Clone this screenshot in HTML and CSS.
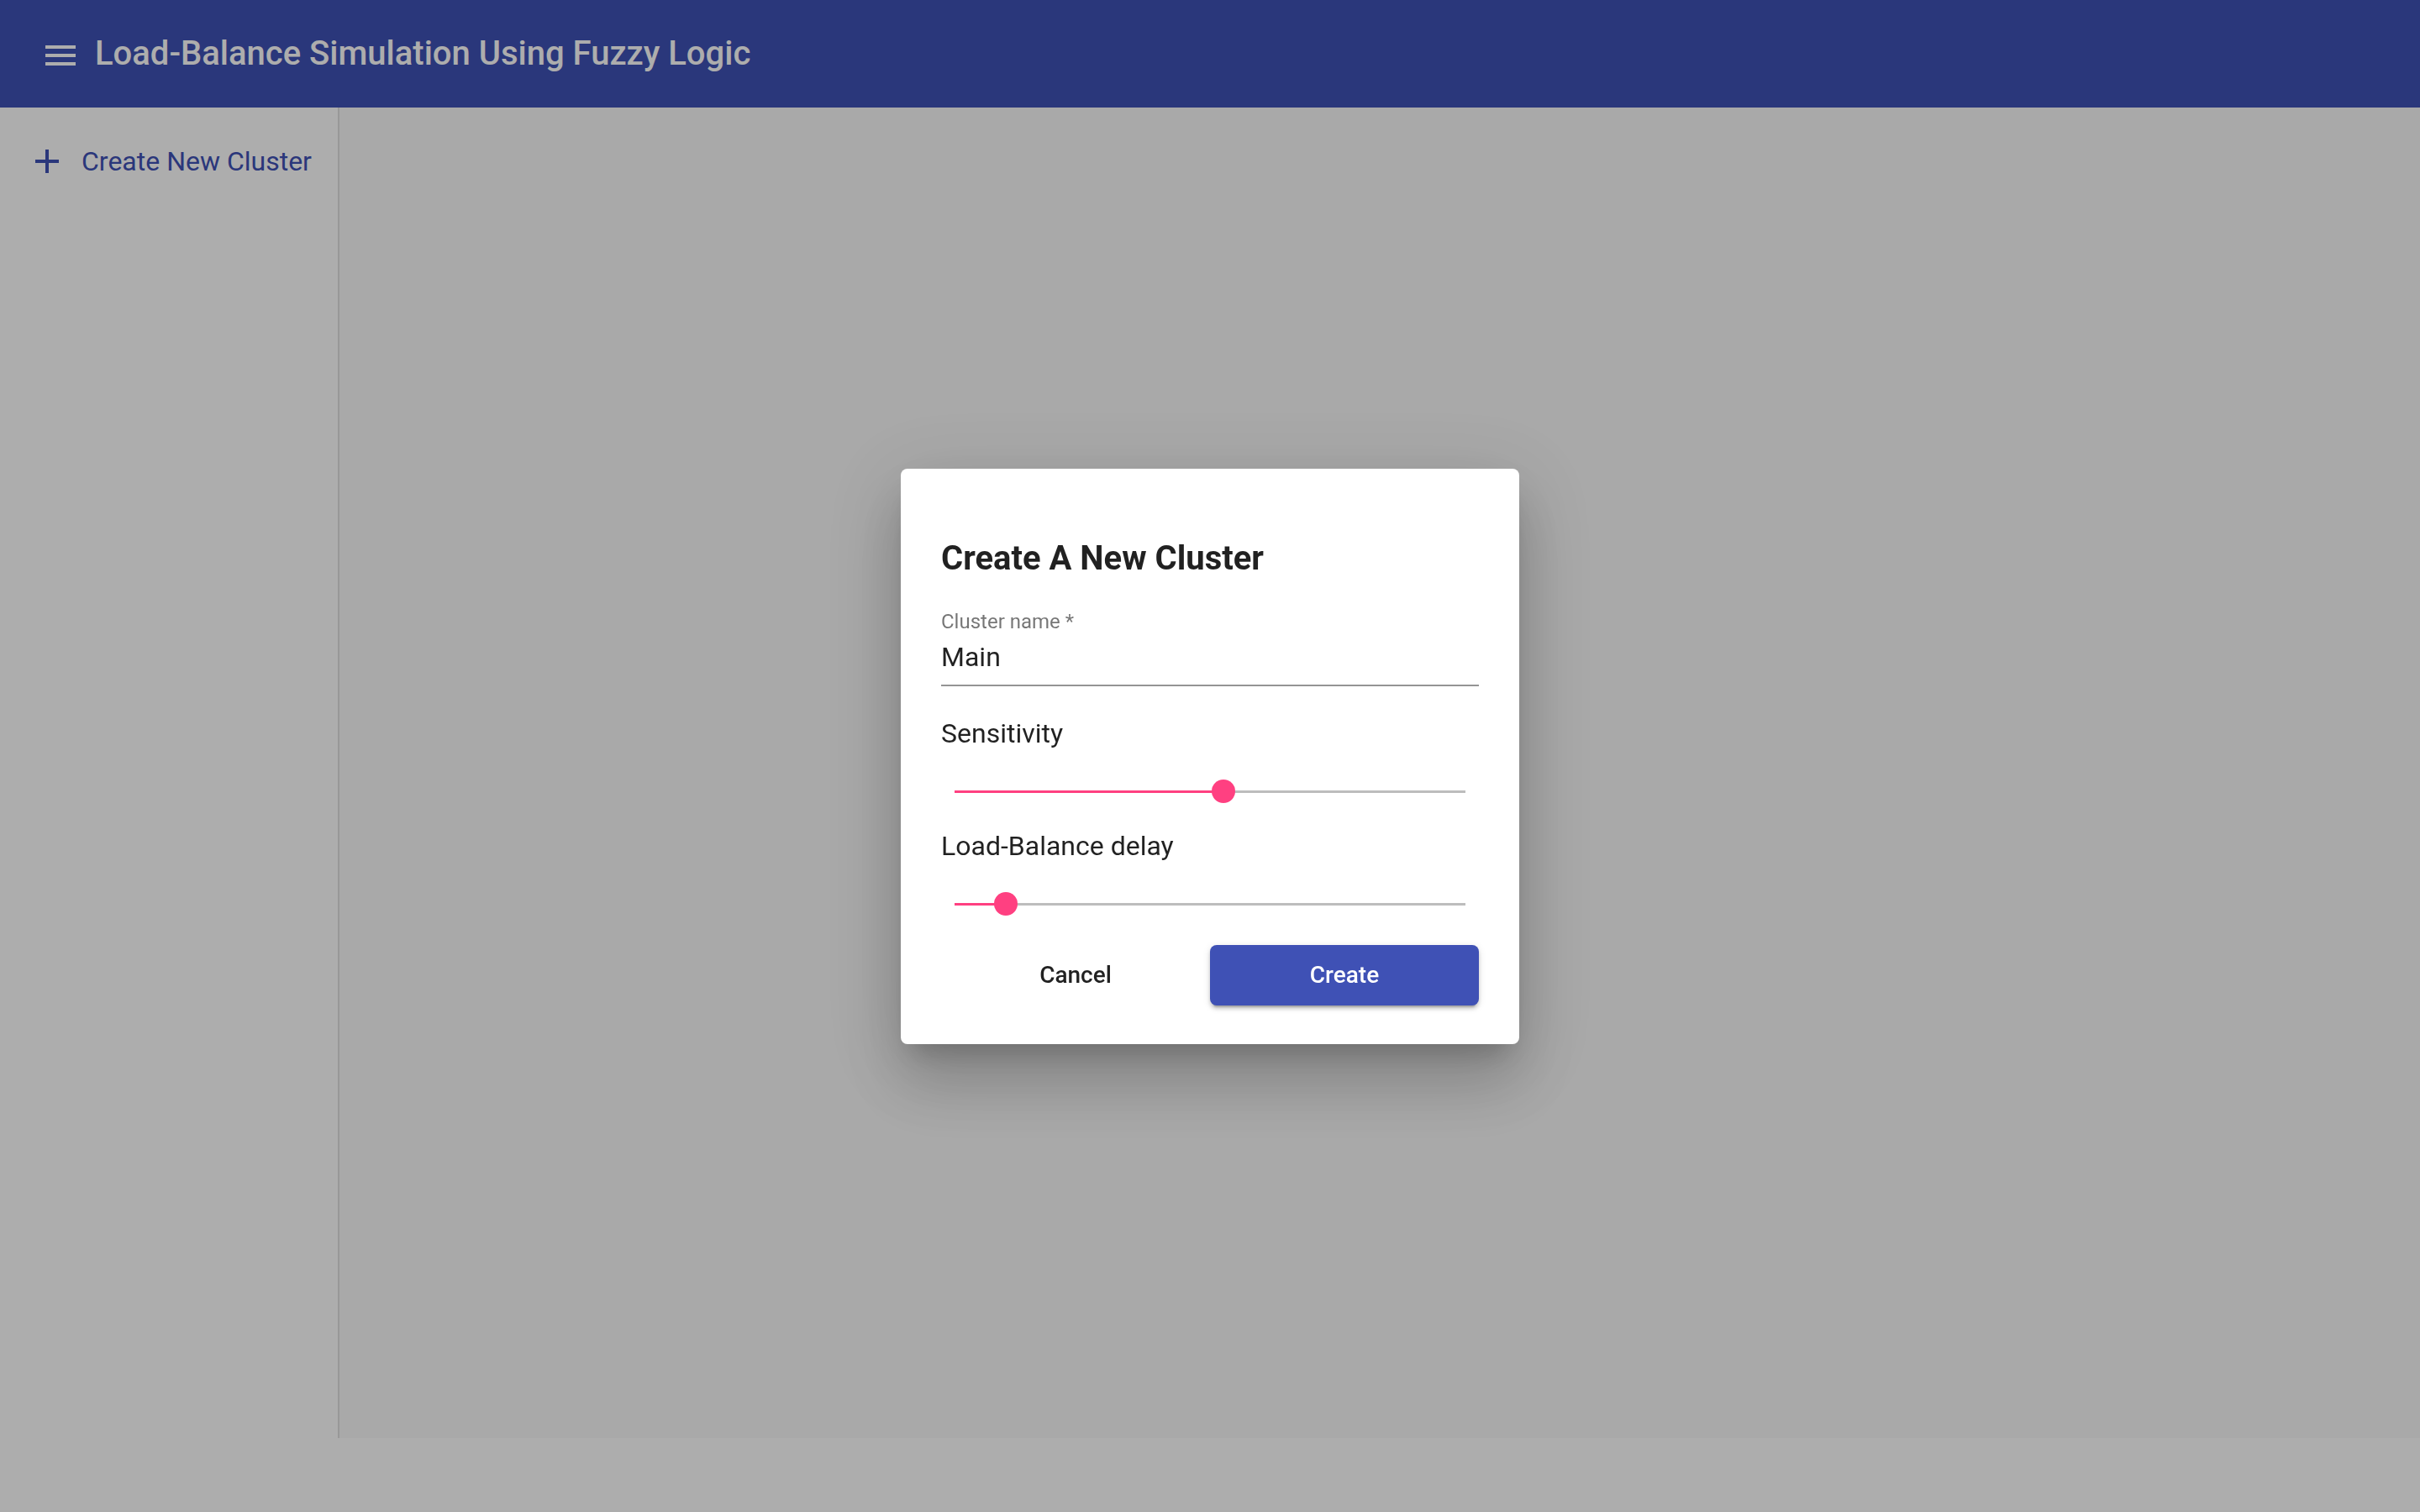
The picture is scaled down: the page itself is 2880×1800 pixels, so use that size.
FILE: index.html
```html
<!DOCTYPE html>
<html lang="en">
  <head>
    <meta charset="UTF-8" />
    <meta name="viewport" content="width=device-width, initial-scale=1.0" />
    <title>Load-Balance Simulation Using Fuzzy Logic</title>
    <link rel="stylesheet" href="styles.css">
  </head>
  <body>
    <div class="app">
      <header class="app-bar">
        <button class="menu-btn" aria-label="menu">
          <svg viewBox="0 0 24 24" width="48" height="48">
            <path d="M3 18h18v-2H3v2zm0-5h18v-2H3v2zm0-7v2h18V6H3z" fill="#fff" />
          </svg>
        </button>
        <h1 class="app-title">Load-Balance Simulation Using Fuzzy Logic</h1>
      </header>
      <div class="app-body">
        <nav class="sidebar">
          <div class="nav-item">
            <svg viewBox="0 0 24 24" width="48" height="48">
              <path d="M19 13h-6v6h-2v-6H5v-2h6V5h2v6h6v2z" fill="#3f51b5" />
            </svg>
            <span>Create New Cluster</span>
          </div>
        </nav>
        <main class="content"></main>
      </div>
    </div>

    <div class="backdrop">
      <div class="dialog">
        <h2 class="dialog-title">Create A New Cluster</h2>
        <label class="field-label" for="cluster-name">Cluster name *</label>
        <input class="field-input" id="cluster-name" type="text" value="Main" />

        <p class="slider-label">Sensitivity</p>
        <div class="slider">
          <div class="track"></div>
          <div class="track-fill" style="width: 52.6%"></div>
          <div class="thumb" style="left: 52.6%"></div>
        </div>

        <p class="slider-label">Load-Balance delay</p>
        <div class="slider">
          <div class="track"></div>
          <div class="track-fill" style="width: 10%"></div>
          <div class="thumb" style="left: 10%"></div>
        </div>

        <div class="actions">
          <button class="btn cancel">Cancel</button>
          <button class="btn create">Create</button>
        </div>
      </div>
    </div>
  </body>
</html>
```

FILE: styles.css
```css
body {
  margin: 0;
  background-color: #fff;
  font-family: Roboto, "Liberation Sans", sans-serif;
}

.app {
  height: 1712px;
  display: flex;
  flex-direction: column;
}

.app-bar {
  height: 128px;
  flex-shrink: 0;
  background-color: #3f51b5;
  display: flex;
  align-items: center;
  padding-left: 48px;
}

.menu-btn {
  border: none;
  background: none;
  padding: 0;
  width: 48px;
  height: 48px;
  margin-top: 4px;
  display: flex;
}

.app-title {
  margin: 0 0 0 17px;
  color: #fff;
  font-size: 40px;
  font-weight: 500;
  line-height: 48px;
}

.app-body {
  flex: 1;
  display: flex;
}

.sidebar {
  width: 402px;
  border-right: 2px solid rgba(0, 0, 0, 0.12);
  background-color: #fff;
  padding-top: 40px;
}

.nav-item {
  display: flex;
  align-items: center;
  height: 48px;
  padding-left: 32px;
  color: #3f51b5;
  font-size: 32px;
  line-height: 48px;
}

.nav-item span {
  margin-left: 17px;
}

.content {
  flex: 1;
  background-color: #fafafa;
}

.backdrop {
  position: fixed;
  top: 0;
  left: 0;
  right: 0;
  bottom: 0;
  background-color: rgba(0, 0, 0, 0.32);
  display: flex;
  justify-content: center;
  align-items: center;
}

.dialog {
  width: 640px;
  background: #fff;
  border-radius: 8px;
  padding: 83px 48px 46px;
  box-shadow: 0 22px 30px -14px rgba(0, 0, 0, 0.2),
    0 48px 76px 6px rgba(0, 0, 0, 0.14), 0 18px 92px 16px rgba(0, 0, 0, 0.12);
}

.dialog-title {
  margin: 0;
  font-size: 40px;
  font-weight: 700;
  line-height: 48px;
  color: rgba(0, 0, 0, 0.87);
}

.field-label {
  display: block;
  margin-top: 39px;
  font-size: 24px;
  line-height: 24px;
  color: rgba(0, 0, 0, 0.54);
}

.field-input {
  display: block;
  box-sizing: border-box;
  width: 100%;
  height: 54px;
  margin: 11px 0 0;
  padding: 0 0 14px;
  border: none;
  border-bottom: 2px solid rgba(0, 0, 0, 0.42);
  outline: none;
  font-family: inherit;
  font-size: 32px;
  line-height: 38px;
  color: rgba(0, 0, 0, 0.87);
}

.slider-label {
  margin: 36px 0 0;
  font-size: 32px;
  line-height: 40px;
  color: rgba(0, 0, 0, 0.87);
}

.slider + .slider-label {
  margin-top: 21px;
}

.slider {
  position: relative;
  height: 48px;
  margin: 25px 16px 0;
}

.track,
.track-fill {
  position: absolute;
  left: 0;
  top: 23px;
  height: 3px;
}

.track {
  right: 0;
  background-color: #bdbdbd;
}

.track-fill {
  background-color: #ff4081;
}

.thumb {
  position: absolute;
  top: 10px;
  width: 28px;
  height: 28px;
  margin-left: -14px;
  border-radius: 50%;
  background-color: #ff4081;
}

.actions {
  display: grid;
  grid-template-columns: 1fr 1fr;
  margin-top: 25px;
}

.btn {
  height: 72px;
  padding-bottom: 2px;
  border: none;
  border-radius: 8px;
  font-family: inherit;
  font-size: 28px;
  font-weight: 500;
  cursor: pointer;
}

.cancel {
  background: none;
  color: rgba(0, 0, 0, 0.87);
}

.create {
  background-color: #3f51b5;
  color: #fff;
  box-shadow: 0 6px 2px -4px rgba(0, 0, 0, 0.2), 0 4px 4px 0 rgba(0, 0, 0, 0.14),
    0 2px 10px 0 rgba(0, 0, 0, 0.12);
}
```
